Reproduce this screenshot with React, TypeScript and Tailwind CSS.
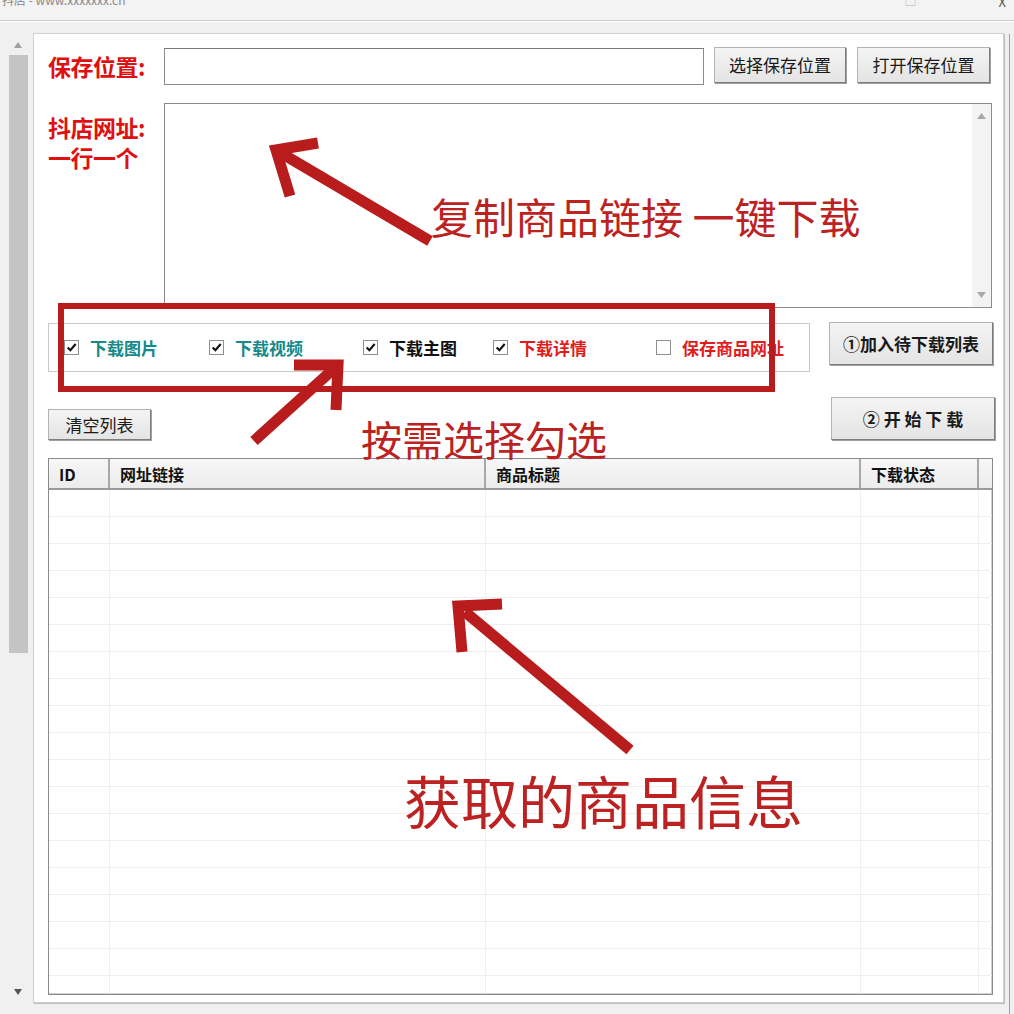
import React from "react";

const FONT = { fontFamily: '"Microsoft YaHei", "Noto Sans CJK SC", "Noto Sans", sans-serif' };

const COLS = [
  { label: "ID", w: "w-[61px]" },
  { label: "网址链接", w: "w-[376px]" },
  { label: "商品标题", w: "w-[375px]" },
  { label: "下载状态", w: "w-[118px]" },
];

const OPTIONS = [
  { label: "下载图片", checked: true, color: "text-[#16898a]", w: "w-[145px]" },
  { label: "下载视频", checked: true, color: "text-[#16898a]", w: "w-[154px]" },
  { label: "下载主图", checked: true, color: "text-[#111111]", w: "w-[130px]" },
  { label: "下载详情", checked: true, color: "text-[#e01d1d]", w: "w-[163px]" },
  { label: "保存商品网址", checked: false, color: "text-[#e01d1d]", w: "w-[140px]" },
];

function WinButton({ children, className = "" }: { children: React.ReactNode; className?: string }) {
  return (
    <div
      className={`flex items-center justify-center border border-[#b4b4b4] border-r-[#7d7d7d] border-b-[#7d7d7d] bg-gradient-to-b from-[#f4f4f4] to-[#e4e4e4] shadow-[1px_1px_0_#a0a0a0] text-[#1a1a1a] ${className}`}
    >
      {children}
    </div>
  );
}

function CheckBox({ checked }: { checked: boolean }) {
  return (
    <div className="w-[15px] h-[15px] border border-[#8f8f8f] bg-white flex items-center justify-center shrink-0">
      {checked && (
        <svg width="11" height="11" viewBox="0 0 10 10">
          <path d="M1.5 5 L4 7.5 L8.8 1.8" fill="none" stroke="#111" strokeWidth="1.9" />
        </svg>
      )}
    </div>
  );
}

function Arrow({ tail, tip, a1, a2 }: { tail: [number, number]; tip: [number, number]; a1: [number, number]; a2: [number, number] }) {
  return (
    <g stroke="#b91c1c" strokeWidth="11" fill="none">
      <line x1={tail[0]} y1={tail[1]} x2={tip[0] + (tail[0] - tip[0]) * 0.04} y2={tip[1] + (tail[1] - tip[1]) * 0.04} />
      <polyline points={`${a1[0]},${a1[1]} ${tip[0]},${tip[1]} ${a2[0]},${a2[1]}`} strokeLinejoin="miter" />
    </g>
  );
}

export default function App() {
  return (
    <div className="relative w-[1014px] h-[1014px] overflow-hidden bg-[#f0f0f0]" style={FONT}>
      {/* title bar */}
      <div className="h-[21px] bg-[#f3f3f3] border-b border-[#c8c8c8] flex items-start justify-between overflow-hidden">
        <span className="text-[12px] text-[#8a8a8a] -mt-[9px] pl-[2px]">抖店 - www.xxxxxxx.cn</span>
        <div className="flex items-start gap-[82px] pr-[8px] -mt-[8px]">
          <span className="text-[12px] text-[#b0b0b0]">□</span>
          <span className="text-[13px] text-[#555]">X</span>
        </div>
      </div>
      <div className="h-[1px] bg-white" />

      <div className="flex pt-[11px] h-[992px]">
        {/* left scrollbar */}
        <div className="w-[33px] flex flex-col items-center pt-[4px] pl-[3px]">
          <div className="w-[19px] h-[960px] bg-[#f0f0f0] flex flex-col items-center">
            <svg width="8" height="6" viewBox="0 0 8 6" className="mt-[5px]"><path d="M0 6 L4 0 L8 6 Z" fill="#a0a0a0" /></svg>
            <div className="mt-[7px] w-[19px] h-[598px] bg-[#c4c4c4]" />
            <div className="flex-1" />
            <svg width="8" height="6" viewBox="0 0 8 6" className="mb-[2px]"><path d="M0 0 L4 6 L8 0 Z" fill="#555" /></svg>
          </div>
        </div>

        {/* main panel */}
        <div className="w-[971px] h-[970px] bg-white border border-[#d0d0d0] shadow-[1px_1px_0_#bdbdbd] pl-[14px] pr-[10px] pt-[13px] flex flex-col">
          {/* row 1 */}
          <div className="flex items-center h-[39px]">
            <div className="w-[116px] text-[23px] font-bold text-[#e01010] leading-none tracking-[-0.5px] whitespace-nowrap">保存位置:</div>
            <div className="w-[540px] h-[37px] border border-[#8c8c8c] border-t-[#7a7a7a] bg-white" />
            <WinButton className="ml-[10px] w-[132px] h-[36px] text-[17px] -mt-[3px]">选择保存位置</WinButton>
            <WinButton className="ml-[11px] w-[133px] h-[36px] text-[17px] -mt-[3px]">打开保存位置</WinButton>
          </div>

          {/* row 2 */}
          <div className="flex mt-[17px]">
            <div className="w-[116px] pt-[9px] text-[23px] font-bold text-[#e01010] leading-[30px] tracking-[-0.5px] whitespace-nowrap">
              <div>抖店网址:</div>
              <div>一行一个</div>
            </div>
            <div className="w-[828px] h-[205px] border border-[#8c8c8c] bg-white flex justify-end">
              <div className="w-[19px] h-full bg-[#f3f3f3] flex flex-col items-center justify-between py-[9px]">
                <svg width="9" height="6" viewBox="0 0 9 6"><path d="M0 6 L4.5 0 L9 6 Z" fill="#a8a8a8" /></svg>
                <svg width="9" height="6" viewBox="0 0 9 6"><path d="M0 0 L4.5 6 L9 0 Z" fill="#a8a8a8" /></svg>
              </div>
            </div>
          </div>

          {/* row 3 */}
          <div className="flex items-start mt-[14px]">
            <div className="mt-[1px] w-[762px] h-[49px] border border-[#c8c8c8] flex items-center pl-[15px]">
              {OPTIONS.map((o) => (
                <div key={o.label} className={`flex items-center gap-[11px] ${o.w}`}>
                  <CheckBox checked={o.checked} />
                  <span className={`text-[17px] font-bold whitespace-nowrap ${o.color}`}>{o.label}</span>
                </div>
              ))}
            </div>
            <WinButton className="ml-[19px] w-[164px] h-[43px] text-[17px] font-bold">①加入待下载列表</WinButton>
          </div>

          {/* row 4 */}
          <div className="flex items-end mt-[25px]">
            <WinButton className="w-[103px] h-[31px] text-[17px]">清空列表</WinButton>
            <div className="flex-1" />
            <WinButton className="w-[164px] h-[43px] text-[17px] font-bold -mr-[2px]">② 开 始 下 载</WinButton>
          </div>

          {/* table */}
          <div className="mt-[18px] w-[945px] h-[537px] border border-[#8a8a8a] shadow-[inset_-1px_-1px_0_#d0d0d0] flex flex-col overflow-hidden bg-white">
            <div className="flex h-[31px] shrink-0 bg-gradient-to-b from-[#f7f7f7] to-[#ececec] border-b-2 border-[#9a9a9a]">
              {COLS.map((c) => (
                <div key={c.label} className={`${c.w} border-r-2 border-[#a8a8a8] flex items-center pl-[10px] text-[16px] font-bold text-[#111]`}>
                  {c.label}
                </div>
              ))}
              <div className="flex-1" />
            </div>
            <div className="flex-1 overflow-hidden">
              {Array.from({ length: 19 }).map((_, i) => (
                <div key={i} className="flex h-[27px] border-b border-[#efefef]">
                  {COLS.map((c) => (
                    <div key={c.label} className={`${c.w} border-r border-[#f0f0f0]`} />
                  ))}
                  <div className="flex-1" />
                </div>
              ))}
            </div>
          </div>
        </div>
        <div className="w-[10px] flex justify-center pt-[1px]">
          <div className="w-[1px] h-[985px] bg-[#a0a0a0]" />
        </div>
      </div>

      {/* annotations */}
      <svg className="absolute inset-0 pointer-events-none" width="1014" height="1014">
        <rect x="61" y="306" width="711" height="83" fill="none" stroke="#b91c1c" strokeWidth="6" />
        <Arrow tail={[430, 241]} tip={[276, 150]} a1={[318, 143]} a2={[290, 196]} />
        <Arrow tail={[254, 441]} tip={[338, 365]} a1={[294, 365]} a2={[336, 410]} />
        <Arrow tail={[630, 750]} tip={[458, 606]} a1={[502, 604]} a2={[462, 652]} />
      </svg>
      <div className="absolute left-[431px] top-[195px] text-[42px] leading-none text-[#bd2222] whitespace-nowrap pointer-events-none">
        复制商品链接 一键下载
      </div>
      <div className="absolute left-[361px] top-[418px] text-[41px] leading-none text-[#bd2222] whitespace-nowrap pointer-events-none">
        按需选择勾选
      </div>
      <div className="absolute left-[404px] top-[771px] text-[57px] leading-none text-[#bd2222] whitespace-nowrap pointer-events-none">
        获取的商品信息
      </div>
    </div>
  );
}
